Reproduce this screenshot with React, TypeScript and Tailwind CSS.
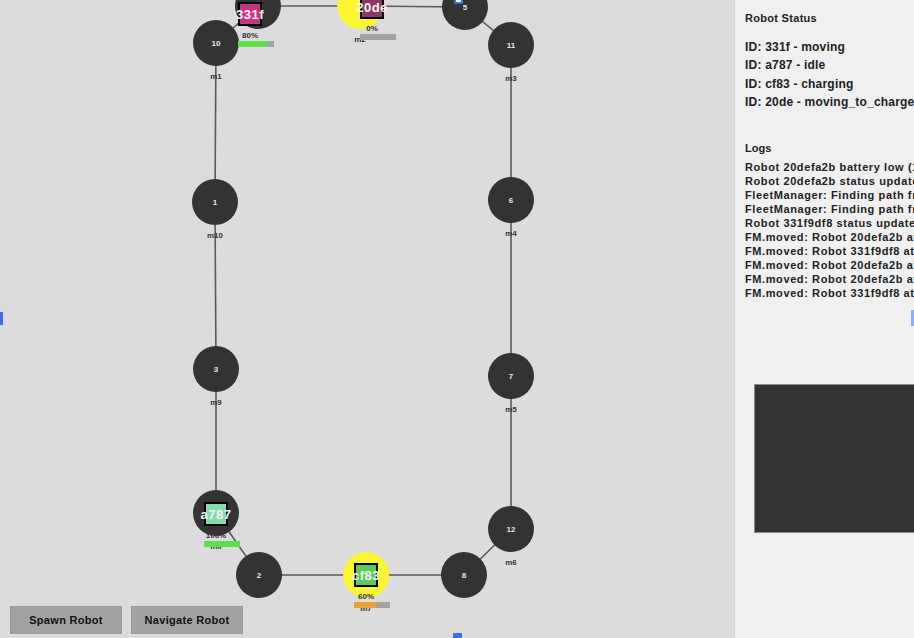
import React from 'react';

type Node = { id: string; x: number; y: number; label?: string; tag?: string; charger?: boolean };

const NODES: Node[] = [
  { id: '4', x: 258, y: 6, label: '' },
  { id: 'c1', x: 360, y: 6, charger: true, tag: 'm2' },
  { id: '5', x: 465, y: 7, label: '5' },
  { id: '10', x: 216, y: 43, label: '10', tag: 'm1' },
  { id: '11', x: 511, y: 45, label: '11', tag: 'm3' },
  { id: '1', x: 215, y: 202, label: '1', tag: 'm10' },
  { id: '6', x: 511, y: 200, label: '6', tag: 'm4' },
  { id: '3', x: 216, y: 369, label: '3', tag: 'm9' },
  { id: '7', x: 511, y: 376, label: '7', tag: 'm5' },
  { id: '0', x: 216, y: 513, label: '', tag: 'm0' },
  { id: '12', x: 511, y: 529, label: '12', tag: 'm6' },
  { id: '2', x: 259, y: 575, label: '2' },
  { id: 'c2', x: 366, y: 575, charger: true, tag: 'm7' },
  { id: '8', x: 464, y: 575, label: '8' },
];

const EDGES: [string, string][] = [
  ['10', '4'], ['4', 'c1'], ['c1', '5'], ['5', '11'], ['11', '6'], ['6', '7'], ['7', '12'],
  ['12', '8'], ['8', 'c2'], ['c2', '2'], ['2', '0'], ['0', '3'], ['3', '1'], ['1', '10'],
];

const ROBOTS = [
  { id: '331f', x: 250, y: 14, color: '#c93482', battery: 80, bar: '#5ee04a' },
  { id: '20de', x: 372, y: 7, color: '#8a3a62', battery: 0, bar: '#5ee04a' },
  { id: 'a787', x: 216, y: 514, color: '#84dcae', battery: 100, bar: '#5ee04a' },
  { id: 'cf83', x: 366, y: 575, color: '#5ccb5c', battery: 60, bar: '#eea033' },
];

const STATUS = ['ID: 331f - moving', 'ID: a787 - idle', 'ID: cf83 - charging', 'ID: 20de - moving_to_charger'];

const LOGS = [
  'Robot 20defa2b battery low (15%)',
  'Robot 20defa2b status updated',
  'FleetManager: Finding path from',
  'FleetManager: Finding path from',
  'Robot 331f9df8 status updated',
  'FM.moved: Robot 20defa2b at m2',
  'FM.moved: Robot 331f9df8 at m1',
  'FM.moved: Robot 20defa2b at m2',
  'FM.moved: Robot 20defa2b at m2',
  'FM.moved: Robot 331f9df8 at m1',
];

const font = { fontFamily: '"Liberation Sans", Arial, sans-serif' };

function FleetMap() {
  const pos = (id: string) => NODES.find(n => n.id === id)!;
  return (
    <svg className="absolute inset-0" width={734} height={638} style={font}>
      {EDGES.map(([a, b], i) => {
        const p = pos(a), q = pos(b);
        return <line key={i} x1={p.x} y1={p.y} x2={q.x} y2={q.y} stroke="#5a5a5a" strokeWidth={1.6} />;
      })}
      {NODES.map(n => (
        <g key={n.id}>
          <circle cx={n.x} cy={n.y} r={23} fill={n.charger ? '#fbf532' : '#333333'} />
          {n.label && (
            <text x={n.x} y={n.y + 3} textAnchor="middle" fontSize={8} fontWeight={700} fill="#e8e8e8">{n.label}</text>
          )}
          {n.tag && (
            <text x={n.x} y={n.y + 36} textAnchor="middle" fontSize={8} fontWeight={700} fill="#333">{n.tag}</text>
          )}
        </g>
      ))}
      {ROBOTS.map(r => (
        <g key={r.id}>
          <rect x={r.x - 11} y={r.y - 11} width={22} height={22} fill={r.color} stroke="#000" strokeWidth={2} />
          <text x={r.x} y={r.y + 5} textAnchor="middle" fontSize={13} fontWeight={700} letterSpacing={0.5} fill="#f4f4f4">{r.id}</text>
          <text x={r.x} y={r.y + 24} textAnchor="middle" fontSize={8} fontWeight={700} fill="#333">{r.battery}%</text>
          <rect x={r.x - 12} y={r.y + 27} width={36} height={6} fill="#a3a3a3" />
          <rect x={r.x - 12} y={r.y + 27} width={(36 * r.battery) / 100} height={6} fill={r.bar} />
        </g>
      ))}
      <rect x={454} y={0} width={9} height={4} fill="#3b6fe0" />
      <rect x={456} y={0} width={5} height={2} fill="#ffffff" />
      <rect x={453} y={633} width={9} height={5} fill="#3b6fe0" />
      <rect x={0} y={312} width={3} height={13} fill="#3b6fe0" />
    </svg>
  );
}

export default function App() {
  return (
    <div className="flex w-[914px] h-[638px] overflow-hidden bg-[#dcdcdc]" style={font}>
      <div className="relative w-[734px] h-full flex flex-col justify-end">
        <FleetMap />
        <div className="relative flex gap-[9px] pl-[10px] pb-[4px]">
          <button className="w-[112px] h-[28px] bg-[#a2a2a2] border border-[#999] text-[11px] font-bold tracking-[0.3px] text-[#111]">
            Spawn Robot
          </button>
          <button className="w-[112px] h-[28px] bg-[#a2a2a2] border border-[#999] text-[11px] font-bold tracking-[0.3px] text-[#111]">
            Navigate Robot
          </button>
        </div>
      </div>
      <div className="relative w-[180px] h-full bg-[#f0f0f0] border-l border-[#d8d8d8] flex flex-col pl-[10px] overflow-hidden">
        <div className="mt-[10px] text-[11px] font-bold tracking-[0.3px] text-[#222] whitespace-nowrap">Robot Status</div>
        <div className="mt-[11px] flex flex-col">
          {STATUS.map(s => (
            <div key={s} className="h-[18.5px] text-[12px] font-bold tracking-[0.2px] text-[#222] whitespace-nowrap leading-[18px]">{s}</div>
          ))}
        </div>
        <div className="mt-[28px] text-[11px] font-bold text-[#222] whitespace-nowrap">Logs</div>
        <div className="mt-[4px] flex flex-col">
          {LOGS.map((l, i) => (
            <div key={i} className="h-[14px] text-[11px] font-bold tracking-[0.6px] text-[#222] whitespace-nowrap leading-[14px]">{l}</div>
          ))}
        </div>
        <div className="ml-[9px] mt-[84px] w-[200px] h-[149px] bg-[#333] border border-[#8a8a8a] shrink-0" />
        <div className="absolute right-0 top-[310px] w-[3px] h-[16px] bg-[#8fb0ee]" />
      </div>
    </div>
  );
}
